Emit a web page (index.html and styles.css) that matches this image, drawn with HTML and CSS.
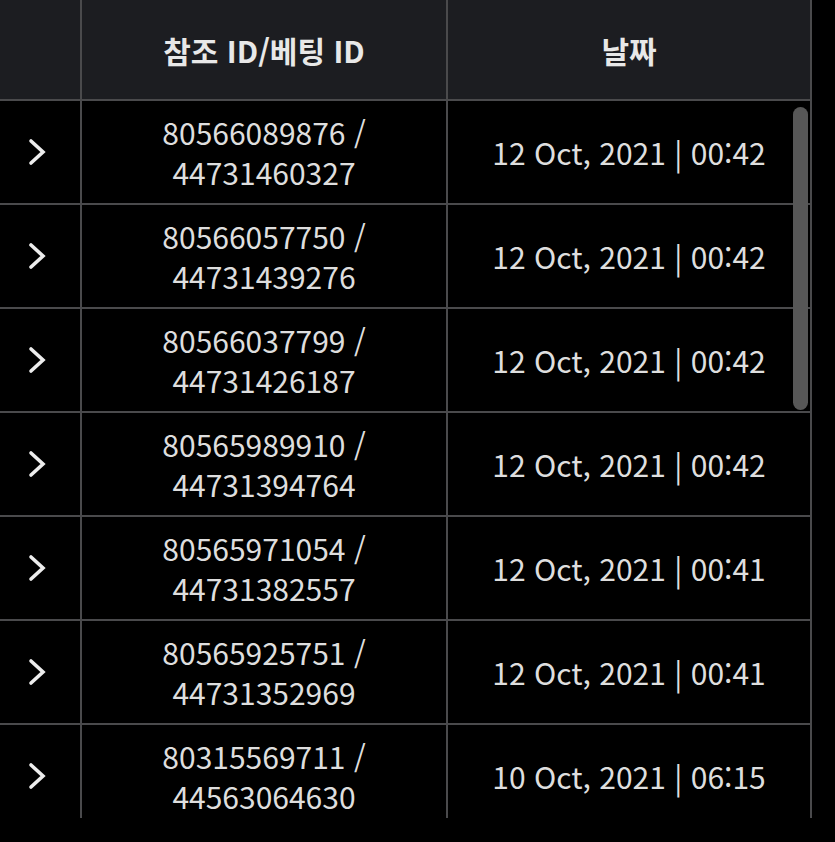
FILE: index.html
```html
<!DOCTYPE html>
<html lang="ko">
<head>
    <meta charset="UTF-8">
    <meta name="viewport" content="width=device-width, initial-scale=1.0">
    <title>베팅 내역</title>
    <link rel="stylesheet" href="styles.css">
</head>
<body>

    <div class="history">
        <div class="history-table">
            <div class="row head">
                <div class="cell arrow"></div>
                <div class="cell">참조 ID/베팅 ID</div>
                <div class="cell">날짜</div>
            </div>

            <div class="row">
                <div class="cell arrow"><svg width="18" height="28" viewBox="0 0 18 28"><polyline points="3,3 15,14 3,25"/></svg></div>
                <div class="cell">80566089876 /<br>44731460327</div>
                <div class="cell">12 Oct, 2021 | 00:42</div>
            </div>
            <div class="row">
                <div class="cell arrow"><svg width="18" height="28" viewBox="0 0 18 28"><polyline points="3,3 15,14 3,25"/></svg></div>
                <div class="cell">80566057750 /<br>44731439276</div>
                <div class="cell">12 Oct, 2021 | 00:42</div>
            </div>
            <div class="row">
                <div class="cell arrow"><svg width="18" height="28" viewBox="0 0 18 28"><polyline points="3,3 15,14 3,25"/></svg></div>
                <div class="cell">80566037799 /<br>44731426187</div>
                <div class="cell">12 Oct, 2021 | 00:42</div>
            </div>
            <div class="row">
                <div class="cell arrow"><svg width="18" height="28" viewBox="0 0 18 28"><polyline points="3,3 15,14 3,25"/></svg></div>
                <div class="cell">80565989910 /<br>44731394764</div>
                <div class="cell">12 Oct, 2021 | 00:42</div>
            </div>
            <div class="row">
                <div class="cell arrow"><svg width="18" height="28" viewBox="0 0 18 28"><polyline points="3,3 15,14 3,25"/></svg></div>
                <div class="cell">80565971054 /<br>44731382557</div>
                <div class="cell">12 Oct, 2021 | 00:41</div>
            </div>
            <div class="row">
                <div class="cell arrow"><svg width="18" height="28" viewBox="0 0 18 28"><polyline points="3,3 15,14 3,25"/></svg></div>
                <div class="cell">80565925751 /<br>44731352969</div>
                <div class="cell">12 Oct, 2021 | 00:41</div>
            </div>
            <div class="row">
                <div class="cell arrow"><svg width="18" height="28" viewBox="0 0 18 28"><polyline points="3,3 15,14 3,25"/></svg></div>
                <div class="cell">80315569711 /<br>44563064630</div>
                <div class="cell">10 Oct, 2021 | 06:15</div>
            </div>
        </div>

        <!-- barre de défilement -->
        <div class="scroll-thumb"></div>
    </div>

</body>
</html>
```

FILE: styles.css
```css
body {
    font-family: "Noto Sans CJK KR", "Noto Sans", sans-serif;
    background-color: #000000;
    color: #dedede;
    margin: 0;
    padding: 0;
}

.history {
    position: relative;
    width: 812px;
    height: 818px;
    overflow: hidden;
}

.history-table {
    display: flex;
    flex-direction: column;
}

.row {
    display: grid;
    grid-template-columns: 82px 366px 364px;
    height: 104px;
    border-bottom: 2px solid #4a4a4c;
    box-sizing: border-box;
}

.row.head {
    height: 101px;
    background-color: #1c1d21;
    font-weight: bold;
    color: #e8e8e8;
}

.cell {
    display: flex;
    align-items: center;
    justify-content: center;
    text-align: center;
    border-right: 2px solid #4a4a4c;
    font-size: 30px;
    line-height: 40px;
}

.arrow {
    padding-right: 6px;
}

.arrow svg polyline {
    fill: none;
    stroke: #ededed;
    stroke-width: 3.6;
    stroke-linecap: round;
    stroke-linejoin: miter;
}

.scroll-thumb {
    position: absolute;
    left: 793px;
    top: 107px;
    width: 15px;
    height: 303px;
    border-radius: 8px;
    background-color: #575757;
}
```
